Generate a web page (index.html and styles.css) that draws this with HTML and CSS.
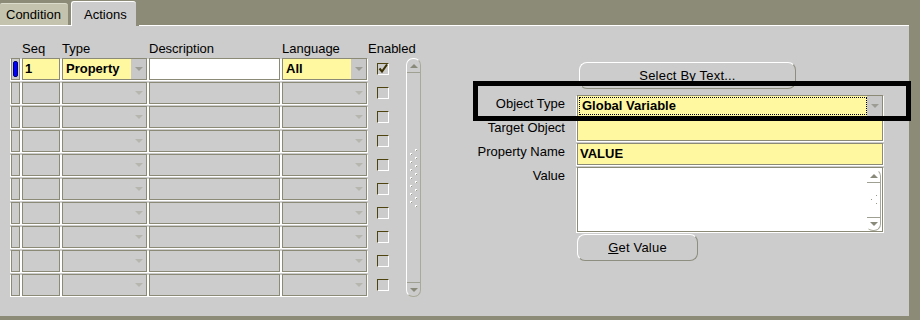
FILE: index.html
```html
<!DOCTYPE html>
<html>
<head>
<meta charset="utf-8">
<link rel="stylesheet" href="styles.css">
</head>
<body>
<div class="tabs">
  <div class="tab tab-inactive">Condition</div>
  <div class="tab-gap"></div>
  <div class="tab tab-active">Actions</div>
  <div class="tab-fill"></div>
</div>
<div class="panel">
  <div class="grid-area">
    <div class="grid-head">
      <span class="h-ind"></span>
      <span class="h-seq">Seq</span>
      <span class="h-type">Type</span>
      <span class="h-desc">Description</span>
      <span class="h-lang">Language</span>
      <span class="h-en">Enabled</span>
    </div>
    <div class="grid-body">
      <div class="rows">
        <div class="row">
          <div class="f ind"><span class="cur"></span></div>
          <div class="f seq req">1</div>
          <div class="f type req dd"><span class="val">Property</span><span class="arr on"><i></i></span></div>
          <div class="f desc white"></div>
          <div class="f lang req dd"><span class="val">All</span><span class="arr on"><i></i></span></div>
          <div class="cb"><svg width="10" height="10" viewBox="0 0 10 10"><path d="M1.5 4.5 L4 7.5 L9 0.5" fill="none" stroke="#3a3000" stroke-width="2"/></svg></div>
        </div>
        <div class="row"><div class="f ind"></div><div class="f seq"></div><div class="f type dd"><span class="val"></span><span class="arr"><i></i></span></div><div class="f desc"></div><div class="f lang dd"><span class="val"></span><span class="arr"><i></i></span></div><div class="cb"></div></div>
        <div class="row"><div class="f ind"></div><div class="f seq"></div><div class="f type dd"><span class="val"></span><span class="arr"><i></i></span></div><div class="f desc"></div><div class="f lang dd"><span class="val"></span><span class="arr"><i></i></span></div><div class="cb"></div></div>
        <div class="row"><div class="f ind"></div><div class="f seq"></div><div class="f type dd"><span class="val"></span><span class="arr"><i></i></span></div><div class="f desc"></div><div class="f lang dd"><span class="val"></span><span class="arr"><i></i></span></div><div class="cb"></div></div>
        <div class="row"><div class="f ind"></div><div class="f seq"></div><div class="f type dd"><span class="val"></span><span class="arr"><i></i></span></div><div class="f desc"></div><div class="f lang dd"><span class="val"></span><span class="arr"><i></i></span></div><div class="cb"></div></div>
        <div class="row"><div class="f ind"></div><div class="f seq"></div><div class="f type dd"><span class="val"></span><span class="arr"><i></i></span></div><div class="f desc"></div><div class="f lang dd"><span class="val"></span><span class="arr"><i></i></span></div><div class="cb"></div></div>
        <div class="row"><div class="f ind"></div><div class="f seq"></div><div class="f type dd"><span class="val"></span><span class="arr"><i></i></span></div><div class="f desc"></div><div class="f lang dd"><span class="val"></span><span class="arr"><i></i></span></div><div class="cb"></div></div>
        <div class="row"><div class="f ind"></div><div class="f seq"></div><div class="f type dd"><span class="val"></span><span class="arr"><i></i></span></div><div class="f desc"></div><div class="f lang dd"><span class="val"></span><span class="arr"><i></i></span></div><div class="cb"></div></div>
        <div class="row"><div class="f ind"></div><div class="f seq"></div><div class="f type dd"><span class="val"></span><span class="arr"><i></i></span></div><div class="f desc"></div><div class="f lang dd"><span class="val"></span><span class="arr"><i></i></span></div><div class="cb"></div></div>
        <div class="row"><div class="f ind"></div><div class="f seq"></div><div class="f type dd"><span class="val"></span><span class="arr"><i></i></span></div><div class="f desc"></div><div class="f lang dd"><span class="val"></span><span class="arr"><i></i></span></div><div class="cb"></div></div>
      </div>
      <div class="vscroll">
        <div class="sb-up"><i></i></div>
        <div class="sb-track">
          <svg width="10" height="60" viewBox="0 0 10 60">
            <g fill="#ffffff">
              <rect x="6" y="1" width="2" height="2"/><rect x="1" y="5" width="2" height="2"/>
              <rect x="6" y="9" width="2" height="2"/><rect x="1" y="13" width="2" height="2"/>
              <rect x="6" y="17" width="2" height="2"/><rect x="1" y="21" width="2" height="2"/>
              <rect x="6" y="25" width="2" height="2"/><rect x="1" y="29" width="2" height="2"/>
              <rect x="6" y="33" width="2" height="2"/><rect x="1" y="37" width="2" height="2"/>
              <rect x="6" y="41" width="2" height="2"/><rect x="1" y="45" width="2" height="2"/>
              <rect x="6" y="49" width="2" height="2"/><rect x="1" y="53" width="2" height="2"/>
              <rect x="6" y="57" width="2" height="2"/>
            </g>
            <g fill="#9a9a8a">
              <rect x="7" y="2" width="1" height="1"/><rect x="2" y="6" width="1" height="1"/>
              <rect x="7" y="10" width="1" height="1"/><rect x="2" y="14" width="1" height="1"/>
              <rect x="7" y="18" width="1" height="1"/><rect x="2" y="22" width="1" height="1"/>
              <rect x="7" y="26" width="1" height="1"/><rect x="2" y="30" width="1" height="1"/>
              <rect x="7" y="34" width="1" height="1"/><rect x="2" y="38" width="1" height="1"/>
              <rect x="7" y="42" width="1" height="1"/><rect x="2" y="46" width="1" height="1"/>
              <rect x="7" y="50" width="1" height="1"/><rect x="2" y="54" width="1" height="1"/>
              <rect x="7" y="58" width="1" height="1"/>
            </g>
          </svg>
        </div>
        <div class="sb-down"><i></i></div>
      </div>
    </div>
  </div>

  <div class="form-area">
    <span></span>
    <div class="btn btn-select">Select By Text...</div>

    <label class="lbl">Object Type</label>
    <div class="f req dd ffield focus"><span class="val"><span class="dots">Global Variable</span></span><span class="arr on"><i></i></span></div>

    <label class="lbl">Target Object</label>
    <div class="f req ffield"></div>

    <label class="lbl">Property Name</label>
    <div class="f req ffield">VALUE</div>

    <label class="lbl">Value</label>
    <div class="f white ffield textarea">
      <div class="ta-text"></div>
      <div class="vscroll small">
        <div class="sb-up"><i></i></div>
        <div class="sb-track">
          <svg width="10" height="12" viewBox="0 0 10 12">
            <rect x="6" y="0" width="2" height="2" fill="#fff"/><rect x="1" y="4" width="2" height="2" fill="#fff"/><rect x="6" y="8" width="2" height="2" fill="#fff"/>
            <rect x="7" y="1" width="1" height="1" fill="#9a9a8a"/><rect x="2" y="5" width="1" height="1" fill="#9a9a8a"/><rect x="7" y="9" width="1" height="1" fill="#9a9a8a"/>
          </svg>
        </div>
        <div class="sb-down"><i></i></div>
      </div>
    </div>

    <span></span>
    <div class="btn btn-get"><u>G</u>et Value</div>
  </div>
</div>
<div class="highlight"></div>
</body>
</html>
```
FILE: styles.css
```css
* { box-sizing: border-box; }

body {
  margin: 0;
  width: 920px;
  height: 320px;
  overflow: hidden;
  position: relative;
  background: #8b8b78;
  font-family: "Liberation Sans", Arial, sans-serif;
  font-size: 13px;
  color: #000;
}

/* Tabs */
.tabs {
  display: flex;
  align-items: flex-end;
  width: 909px;
  height: 26px;
}
.tab {
  line-height: 16px;
}
.tab-inactive {
  width: 68px;
  height: 23px;
  background: #c4c4ae;
  border-top: 1px solid #dcdccc;
  border-bottom: 1px solid #fff;
  border-top-right-radius: 3px;
  border-top-left-radius: 2px;
  padding: 3px 0 0 6px;
}
.tab-gap {
  width: 3px;
  height: 1px;
  background: #fff;
}
.tab-active {
  width: 65px;
  height: 25px;
  background: #cccccc;
  border-top: 1px solid #fff;
  border-left: 1px solid #fff;
  border-top-left-radius: 3px;
  border-top-right-radius: 3px;
  padding: 5px 0 0 12px;
}
.tab-fill {
  flex: 1;
  height: 1px;
  margin-left: 3px;
  background: #fff;
}

/* Panel */
.panel {
  width: 909px;
  height: 290px;
  background: #cccccc;
  display: flex;
  align-items: flex-start;
  padding: 15px 0 0 11px;
}

.grid-area {
  display: flex;
  flex-direction: column;
}
.grid-head {
  display: flex;
  height: 16px;
  line-height: 16px;
  gap: 2px;
  white-space: nowrap;
}
.h-ind { width: 9px; }
.h-seq { width: 38px; }
.h-type { width: 85px; }
.h-desc { width: 131px; }
.h-lang { width: 85px; }
.h-en { width: 40px; margin-left: -1px; }

.grid-body {
  display: flex;
  align-items: flex-start;
}
.rows {
  display: flex;
  flex-direction: column;
}
.row {
  display: flex;
  align-items: center;
  height: 24px;
  gap: 2px;
}

/* Fields */
.f {
  height: 22px;
  border: 1px solid #8a8a76;
  box-shadow: 1px 1px 0 #ffffff, -1px 1px 0 #ffffff;
  background: #cccccc;
  font-weight: bold;
  line-height: 20px;
  padding-left: 2px;
  white-space: nowrap;
  overflow: hidden;
}
.f.req { background: #fff8a0; }
.f.white { background: #ffffff; }
.ind { width: 9px; padding: 0; position: relative; }
.seq { width: 38px; }
.type { width: 85px; }
.desc { width: 131px; }
.lang { width: 85px; }

.cur {
  display: block;
  width: 5px;
  height: 16px;
  margin: 2px 0 0 1px;
  background: #0000ff;
  border: 1px solid #00006a;
  border-radius: 2px;
}

.dd {
  display: flex;
  padding-left: 0;
}
.dd .val {
  flex: 1;
  padding-left: 3px;
}
.arr {
  width: 15px;
  display: flex;
  align-items: center;
  justify-content: center;
}
.arr.on { background: #c8c8c8; }
.arr i {
  display: block;
  width: 0;
  height: 0;
  border-left: 4px solid transparent;
  border-right: 4px solid transparent;
  border-top: 4px solid #b6b6ae;
}
.arr.on i { border-top-color: #9c9c94; }

/* Checkbox */
.cb {
  width: 12px;
  height: 12px;
  margin-left: 8px;
  border-top: 1px solid #4e4410;
  border-left: 1px solid #4e4410;
  border-right: 1px solid #ffffff;
  border-bottom: 1px solid #ffffff;
  display: flex;
  align-items: center;
  justify-content: center;
}

/* Scrollbar */
.vscroll {
  width: 15px;
  height: 239px;
  margin: 1px 0 0 17px;
  border: 1px solid #ffffff;
  border-right-color: #a9a99a;
  border-bottom-color: #a9a99a;
  border-radius: 7px;
  display: flex;
  flex-direction: column;
}
.sb-up, .sb-down {
  height: 14px;
  display: flex;
  align-items: center;
  justify-content: center;
}
.sb-up { border-bottom: 1px solid #a0a092; }
.sb-down { border-top: 1px solid #a0a092; }
.sb-up i, .sb-down i {
  display: block;
  width: 0;
  height: 0;
  border-left: 4px solid transparent;
  border-right: 4px solid transparent;
}
.sb-up i { border-bottom: 4px solid #8a8a7a; }
.sb-down i { border-top: 4px solid #8a8a7a; }
.sb-track {
  flex: 1;
  display: flex;
  align-items: center;
  justify-content: center;
  border-left: 1px solid #ffffff;
  margin-left: -1px;
}
.vscroll.small {
  height: 62px;
  margin: 1px 1px 0 0;
}
.vscroll.small .sb-up,
.vscroll.small .sb-down { height: 13px; }

/* Right form */
.form-area {
  display: grid;
  grid-template-columns: 104px 306px;
  column-gap: 12px;
  row-gap: 2px;
  margin: 21px 0 0 40px;
  align-items: start;
}
.lbl {
  text-align: right;
  line-height: 18px;
  white-space: nowrap;
}
.ffield {
  width: 306px;
  padding-left: 2px;
}
.ffield.dd { padding-left: 0; }
.focus .val { padding: 1px 0 1px 1px; }
.dots {
  display: block;
  height: 18px;
  line-height: 16px;
  padding-left: 2px;
  border: 1px dotted #000;
}
.textarea {
  height: 65px;
  display: flex;
  padding: 0;
}
.ta-text { flex: 1; }

.btn {
  height: 27px;
  line-height: 25px;
  text-align: center;
  background: #cccccc;
  border: 1px solid #ffffff;
  border-right-color: #8e8e80;
  border-bottom-color: #8e8e80;
  border-radius: 8px;
  letter-spacing: 0.2px;
}
.btn-select {
  width: 217px;
  margin: 0 0 4px 2px;
}
.btn-get {
  width: 121px;
}

/* Annotation overlay */
.highlight {
  position: absolute;
  left: 473px;
  top: 81px;
  width: 438px;
  height: 40px;
  border: 5px solid #000;
}
```
